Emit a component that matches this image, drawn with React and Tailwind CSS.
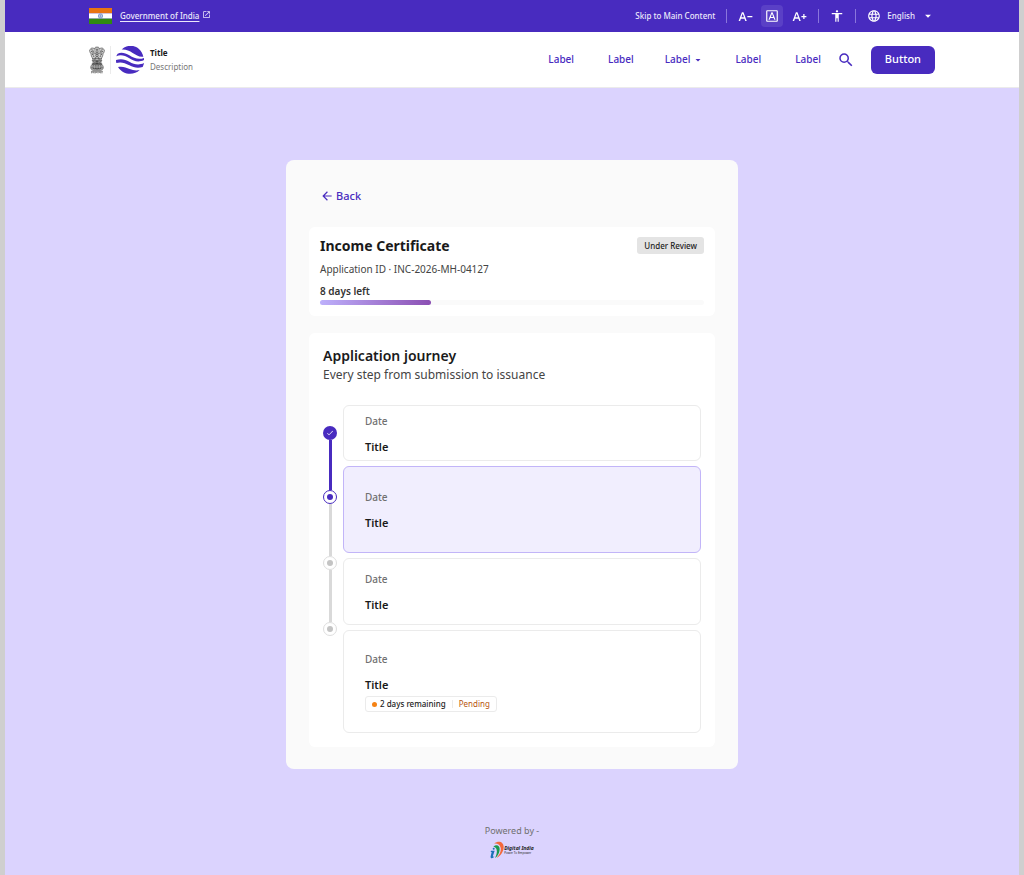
import {
  MdAccessibility,
  MdArrowBack,
  MdArrowDropDown,
  MdCheck,
  MdLanguage,
  MdOpenInNew,
  MdOutlineFontDownload,
  MdSearch,
  MdTextDecrease,
  MdTextIncrease,
} from "react-icons/md";

const navLinks = [
  { id: 1, label: "Label" },
  { id: 2, label: "Label" },
  { id: 3, label: "Label", menu: true },
  { id: 4, label: "Label" },
  { id: 5, label: "Label" },
];

const steps = [
  { id: 1, date: "Date", title: "Title", box: "border-[#ebebeb] pt-2 pb-1" },
  { id: 2, date: "Date", title: "Title", box: "border-[#c2b5f8] bg-[#f1eefe] pt-[23px] pb-5" },
  { id: 3, date: "Date", title: "Title", box: "border-[#ebebeb] pt-[13px] pb-[10px]" },
  { id: 4, date: "Date", title: "Title", box: "border-[#ebebeb] pt-[21px] pb-5", remaining: "2 days remaining", status: "Pending" },
];

function Flag() {
  return (
    <svg viewBox="0 0 69 48" className="h-4 w-[23px]" aria-hidden="true">
      <rect width="69" height="16" fill="#e87511" />
      <rect y="16" width="69" height="16" fill="#fff" />
      <rect y="32" width="69" height="16" fill="#2f8a10" />
      <circle cx="34.5" cy="24" r="6.5" fill="#dfe5f5" stroke="#4a6fb5" strokeWidth="1.8" />
      <path d="M34.5 18v12M28.5 24h12M30.3 19.8l8.4 8.4M38.7 19.8l-8.4 8.4" stroke="#4a6fb5" strokeWidth="0.9" />
    </svg>
  );
}

function Emblem() {
  return (
    <svg viewBox="0 0 48 84" className="h-7 w-4" fill="none" stroke="#333" strokeWidth="1.6" aria-hidden="true">
      {/* three lions */}
      <path d="M17 6c2-4 12-4 14 0 3 3 3 8 1 12 1 6 0 14-3 20H19c-3-6-4-14-3-20-2-4-2-9 1-12z" fill="#bbb" />
      <path d="M16 8C11 4 5 6 3 11c-2 3-2 5 0 6-1 3 1 4 3 4-1 6 2 12 6 18h8" fill="#ccc" />
      <path d="M32 8c5-4 11-2 13 3 2 3 2 5 0 6 1 3-1 4-3 4 1 6-2 12-6 18h-8" fill="#ccc" />
      <path d="M20 9l3 2M28 9l-3 2M24 11v6M20 18c2 3 6 3 8 0M19 22l3 4 2-3 2 3 3-4M20 28l4 5 4-5M7 11l4 1M6 17l5-1M9 20l4 3M9 25l5 2M41 11l-4 1M42 17l-5-1M39 20l-4 3M39 25l-5 2M12 30l4 2M36 30l-4 2M20 34v6M28 34v6" strokeWidth="2" />
      <path d="M12 13c2 4 2 8 4 11M36 13c-2 4-2 8-4 11M11 36v5M16 36v5M32 36v5M37 36v5" />
      {/* abacus with wheel */}
      <path d="M10 42h28v3H10zM12 45h24v8H12zM9 53h30v3H9z" fill="#ddd" />
      <circle cx="24" cy="49" r="4" />
      <path d="M24 45v8M20 49h8M14 52l2-4 3 4M30 52l2-4 3 4" />
      {/* lotus base */}
      <path d="M9 56c-6 6-5 14 3 17h24c8-3 9-11 3-17z" fill="#bbb" />
      <path d="M13 57c-2 6 0 11 3 14M19 57c-1 6 0 11 2 14M24 57v14M29 57c1 6 0 11-2 14M35 57c2 6 0 11-3 14M7 65c10 4 24 4 34 0" strokeWidth="1.8" />
      <path d="M6 76h36" strokeWidth="1.5" />
      <path d="M8 77v5M12 77v4M15 77v5M19 77v5M23 77v4M27 77v5M31 77v4M35 77v5M39 77v5" strokeWidth="1.8" />
    </svg>
  );
}

function WaveMark() {
  return (
    <svg viewBox="0 0 84 84" className="h-7 w-7" fill="#482bbf" aria-hidden="true">
      <path d="M17 11C30-4 55-4 68 8c8 7 12 15 14 24-12 2-22-5-32-11-10-7-21-11-33-10z" />
      <path d="M5 23c11-5 23-2 35 5 14 9 28 14 44 8v6c-16 8-30 4-44-5C27 29 14 25 1 31c1-3 2-6 4-8z" />
      <path d="M0 42c15-5 28-2 40 5 14 8 28 12 44 4-1 5-2 8-4 12-14 5-27 2-40-5-14-8-26-11-39-7-1-3-1-6-1-9z" />
      <path d="M6 63c13-3 24 1 35 6 10 4 20 6 30 3C54 89 22 88 6 63z" />
    </svg>
  );
}

function DigitalIndia() {
  return (
    <div className="flex h-[18px] items-center">
      <svg viewBox="0 0 42 54" className="h-[18px] w-[14px]" fill="none" aria-hidden="true">
        <path d="M12 8C26-3 42 2 41 20c-1 14-11 26-21 30 10-10 14-20 12-30C30 10 20 6 12 8z" fill="#f4683c" />
        <path d="M10 17c10-8 20-3 19 9-1 12-7 20-14 25 4-9 7-17 5-25-2-7-6-9-10-9z" fill="#1b9a50" />
        <path d="M3 29h11L9 44c-1 4 1 4 4 2-2 7-13 9-11 0l3-13H2z" fill="#1b72b8" />
        <circle cx="11" cy="23" r="3" fill="#1b72b8" />
      </svg>
      <div className="flex flex-col text-[#222]">
        <span className="text-[5px] leading-[5px] font-bold italic">Digital India</span>
        <span className="text-[3px] leading-[4px]">Power To Empower</span>
      </div>
    </div>
  );
}

function TopBar() {
  return (
    <div className="flex h-8 items-center justify-between bg-[#482bbf] px-[84px] text-[8px] font-medium text-[#ece8fb]">
      <a href="#india" className="flex items-center">
        <Flag />
        <span className="ml-2 underline underline-offset-2">Government of India</span>
        <MdOpenInNew className="mb-1 ml-[3px] size-[9px]" />
      </a>

      <div className="flex items-center">
        <a href="#main">Skip to Main Content</a>
        <span className="mx-[11px] h-[14px] w-px bg-[#8a76dc]" />
        <button aria-label="Decrease text size" className="mr-2">
          <MdTextDecrease className="size-[15px] text-white" />
        </button>
        <button aria-label="Default text size" className="flex size-[22px] items-center justify-center rounded-sm bg-[#5a40c6]">
          <MdOutlineFontDownload className="size-[14px] text-white" />
        </button>
        <button aria-label="Increase text size" className="ml-[9px]">
          <MdTextIncrease className="size-[15px] text-white" />
        </button>
        <span className="mx-[11px] h-[14px] w-px bg-[#8a76dc]" />
        <button aria-label="Accessibility options">
          <MdAccessibility className="size-[14px] text-white" />
        </button>
        <span className="mx-[11px] h-[14px] w-px bg-[#8a76dc]" />
        <button className="flex items-center">
          <MdLanguage className="size-[14px] text-white" />
          <span className="mx-[6px]">English</span>
          <MdArrowDropDown className="size-[14px] text-white" />
        </button>
      </div>
    </div>
  );
}

function Header() {
  return (
    <header className="flex h-14 items-center justify-between border-b border-[#ebebeb] bg-white px-[84px]">
      <div className="flex items-center">
        <Emblem />
        <span className="mx-[5px] h-7 w-px bg-[#ebebeb]" />
        <WaveMark />
        <div className="ml-[6px] flex flex-col text-[8px] leading-[14px]">
          <span className="font-bold text-[#1a1a1a]">Title</span>
          <span className="text-[#777]">Description</span>
        </div>
      </div>

      <nav className="flex items-center text-[10px] font-medium text-[#482bbf]">
        <div className="flex items-center gap-[2px]">
          {navLinks.map((link) => (
            <a
              key={link.id}
              href="#nav"
              className={link.menu ? "flex items-center px-[13px]" : "flex items-center px-4"}
            >
              {link.label}
              {link.menu && <MdArrowDropDown className="ml-[2px] size-3" />}
            </a>
          ))}
        </div>
        <button aria-label="Search">
          <MdSearch className="size-[18px]" />
        </button>
        <button className="ml-4 h-7 rounded-md bg-[#482bbf] px-[14px] text-[11px] text-white">
          Button
        </button>
      </nav>
    </header>
  );
}

function Summary() {
  return (
    <section className="rounded-md bg-white px-[11px] pt-[10px] pb-[11px]">
      <div className="flex items-start justify-between">
        <h1 className="text-[14px] leading-[18px] font-bold text-[#1a1a1a]">Income Certificate</h1>
        <span className="rounded-[3px] bg-[#e4e4e4] px-[7px] text-[8px] leading-[17px] font-medium text-[#222]">
          Under Review
        </span>
      </div>
      <p className="mt-[7px] text-[10px] leading-[14px] text-[#444]">Application ID · INC-2026-MH-04127</p>
      <p className="mt-2 text-[10px] leading-[14px] font-semibold text-[#333]">8 days left</p>
      <div className="mt-[2px] h-[5px] rounded-full bg-[#fafafa]">
        <div className="h-full w-[29%] rounded-full bg-linear-to-r from-[#bdb0fb] to-[#8b4fb3]" />
      </div>
    </section>
  );
}

function Dot({ state }) {
  if (state === "done") {
    return (
      <span className="flex size-[14px] items-center justify-center rounded-full bg-[#482bbf]">
        <MdCheck className="size-2 text-white" />
      </span>
    );
  }
  if (state === "current") {
    return (
      <span className="flex size-[14px] items-center justify-center rounded-full border border-[#482bbf] bg-white">
        <span className="size-[6px] rounded-full bg-[#482bbf]" />
      </span>
    );
  }
  return (
    <span className="flex size-[14px] items-center justify-center rounded-full border border-[#dedede] bg-white">
      <span className="size-[6px] rounded-full bg-[#c4c4c4]" />
    </span>
  );
}

function Journey() {
  return (
    <section className="mt-[17px] rounded-md bg-white px-[14px] pt-[13px] pb-[14px]">
      <h2 className="text-[14px] leading-[20px] font-semibold text-[#1a1a1a]">Application journey</h2>
      <p className="text-[12px] leading-[18px] text-[#444]">Every step from submission to issuance</p>

      <div className="mt-[21px] flex gap-[6px]">
        {/* progress rail */}
        <div className="flex flex-col items-center pt-[21px]">
          <Dot state="done" />
          <span className="h-[50px] w-[3px] bg-[#482bbf]" />
          <Dot state="current" />
          <span className="h-[52px] w-[3px] bg-[#d9d9d9]" />
          <Dot state="pending" />
          <span className="h-[52px] w-[3px] bg-[#d9d9d9]" />
          <Dot state="pending" />
        </div>

        <ol className="flex flex-1 flex-col gap-[5px]">
          {steps.map((step) => (
            <li key={step.id} className={`rounded-md border px-[21px] ${step.box}`}>
              <p className="text-[10px] leading-[14px] font-medium text-[#707070]">{step.date}</p>
              <h3 className="mt-[10px] text-[11px] leading-[18px] font-semibold text-[#1a1a1a]">{step.title}</h3>
              {step.status && (
                <div className="mt-[2px] flex w-fit items-center rounded-[3px] border border-[#ebebeb] bg-white px-[6px] text-[8px] leading-[14px]">
                  <span className="size-[5px] rounded-full bg-[#f58214]" />
                  <span className="ml-[3px] font-medium text-[#222]">{step.remaining}</span>
                  <span className="mx-[6px] h-2 w-px bg-[#ebebeb]" />
                  <span className="text-[#b8560f]">{step.status}</span>
                </div>
              )}
            </li>
          ))}
        </ol>
      </div>
    </section>
  );
}

function App() {
  return (
    <div className="min-h-screen bg-[#cfcfcf] px-[5px] font-['Noto_Sans',sans-serif]">
      <div className="flex min-h-screen flex-col bg-[#dbd3fe]">
        <TopBar />
        <Header />

        <main id="main" className="mx-auto mt-[72px] w-full max-w-[452px] rounded-lg bg-[#fafafa] px-[23px] pb-[22px]">
          <button className="mt-7 mb-[23px] ml-[11px] flex h-4 items-center gap-[2px] text-[11px] font-medium text-[#482bbf]">
            <MdArrowBack className="size-[14px]" />
            Back
          </button>
          <Summary />
          <Journey />
        </main>

        <footer className="mt-[55px] flex flex-col items-center gap-1 pb-4">
          <p className="text-[9px] leading-[13px] text-[#707070]">Powered by -</p>
          <DigitalIndia />
        </footer>
      </div>
    </div>
  );
}

export default App;
